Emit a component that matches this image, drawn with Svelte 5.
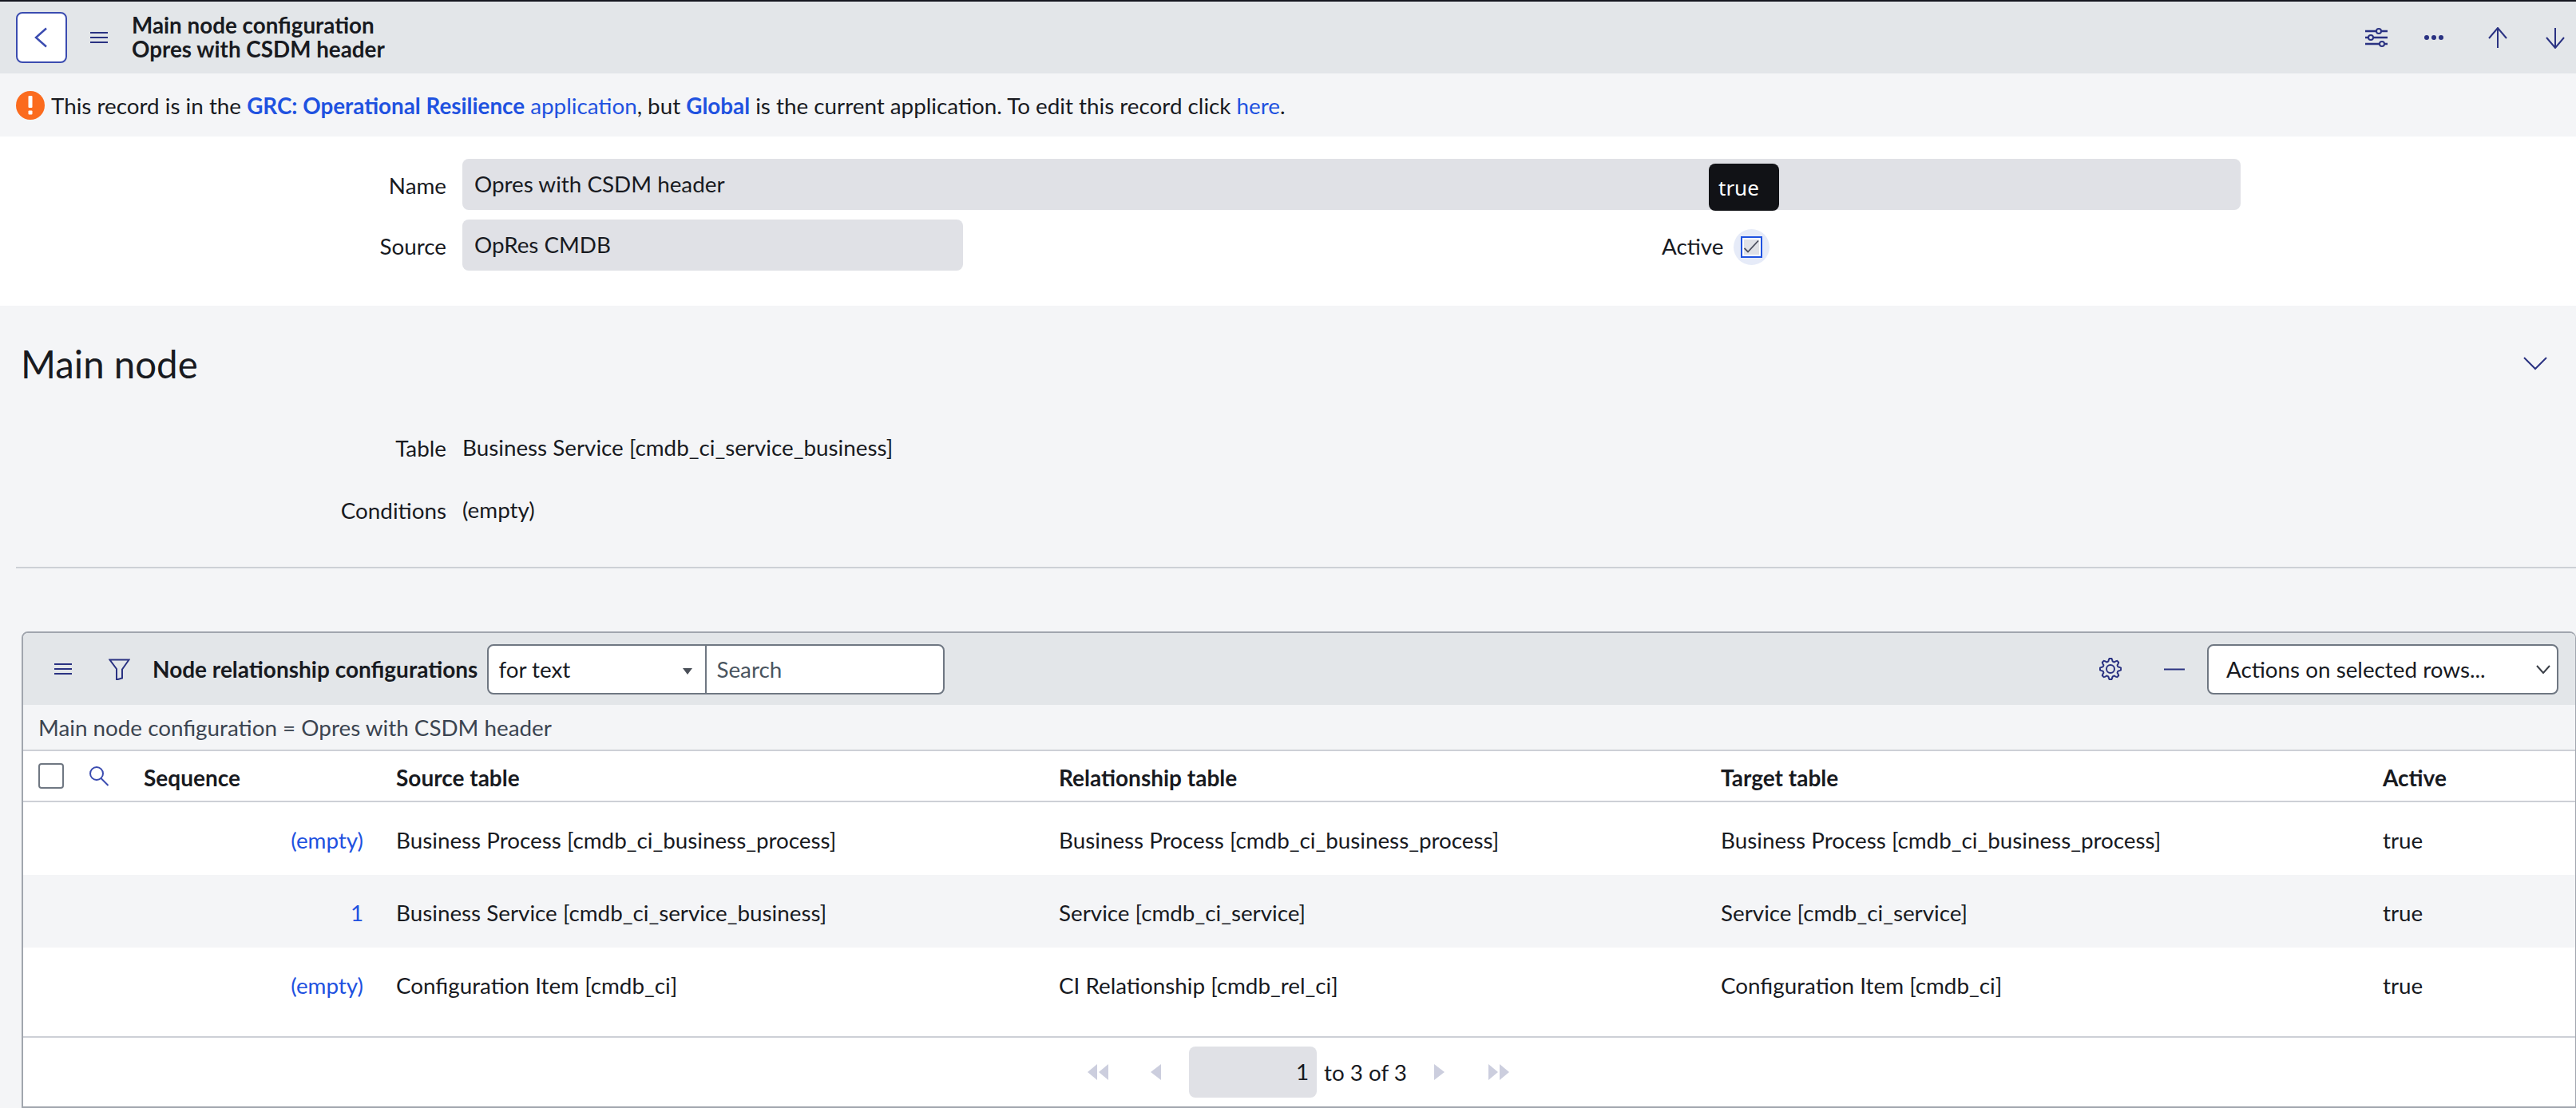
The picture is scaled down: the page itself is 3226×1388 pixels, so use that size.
<script lang="ts">
	type Row = { seq: string; source: string; rel: string; target: string; active: string };

	const rows: Row[] = [
		{
			seq: '(empty)',
			source: 'Business Process [cmdb_ci_business_process]',
			rel: 'Business Process [cmdb_ci_business_process]',
			target: 'Business Process [cmdb_ci_business_process]',
			active: 'true'
		},
		{
			seq: '1',
			source: 'Business Service [cmdb_ci_service_business]',
			rel: 'Service [cmdb_ci_service]',
			target: 'Service [cmdb_ci_service]',
			active: 'true'
		},
		{
			seq: '(empty)',
			source: 'Configuration Item [cmdb_ci]',
			rel: 'CI Relationship [cmdb_rel_ci]',
			target: 'Configuration Item [cmdb_ci]',
			active: 'true'
		}
	];

	// scalloped outline for the list settings cog, 8 lobes
	const gearPath = Array.from({ length: 120 }, (_, i) => {
		const a = (i / 120) * Math.PI * 2;
		const r = 11.4 + 1.7 * Math.max(-1, Math.min(1, 1.6 * Math.cos(8 * a)));
		return `${(14 + r * Math.sin(a)).toFixed(2)} ${(14 - r * Math.cos(a)).toFixed(2)}`;
	}).join('L');
</script>

<div class="page">
	<header class="topbar">
		<button class="back" aria-label="Back">
			<svg width="18" height="26" viewBox="0 0 18 26"><path d="M15 1.500 2 13l13 11.500" /></svg>
		</button>
		<svg class="icon menu" width="22" height="14" viewBox="0 0 22 14"><path d="M0 1h22M0 7h22M0 13h22" /></svg>
		<div class="title">
			<div>Main node configuration</div>
			<div>Opres with CSDM header</div>
		</div>
		<div class="top-actions">
			<svg class="icon sliders" width="28" height="24" viewBox="0 0 28 24">
				<path d="M0 4h28M0 12h28M0 20h28" />
				<circle cx="17" cy="4" r="3" />
				<circle cx="7" cy="12" r="3" />
				<circle cx="21" cy="20" r="3" />
			</svg>
			<svg class="dots" width="24" height="8" viewBox="0 0 24 8">
				<circle cx="3" cy="4" r="3" /><circle cx="12" cy="4" r="3" /><circle cx="21" cy="4" r="3" />
			</svg>
			<svg class="icon up" width="24" height="27" viewBox="0 0 24 27"><path d="M12 26V1M1 14 12 1l11 13" /></svg>
			<svg class="icon down" width="24" height="27" viewBox="0 0 24 27"><path d="M12 1v25M1 13l11 13 11-13" /></svg>
		</div>
	</header>

	<div class="notice">
		<svg width="36" height="36" viewBox="0 0 36 36">
			<circle cx="18" cy="18" r="18" fill="#fb6b1e" />
			<rect x="15.500" y="6" width="5" height="15" rx="1" fill="#fff" />
			<rect x="15.500" y="24.500" width="5" height="5" rx="1" fill="#fff" />
		</svg>
		<span>This record is in the <a href="#a"><b>GRC: Operational Resilience</b> application</a>, but <a href="#b"><b>Global</b></a> is the current application. To edit this record click <a href="#c">here</a>.</span>
	</div>

	<section class="form">
		<div class="field-row">
			<span class="label">Name</span>
			<div class="input wide">Opres with CSDM header</div>
			<div class="tooltip">true</div>
		</div>
		<div class="field-row">
			<span class="label">Source</span>
			<div class="input narrow">OpRes CMDB</div>
			<span class="active-label">Active</span>
			<span class="check">
				<span class="check-box">
					<svg width="19" height="19" viewBox="0 0 19 19"><path d="M0.500 11 5 15.500 18 1.500" /></svg>
				</span>
			</span>
		</div>
	</section>

	<section class="main-node">
		<div class="section-head">
			<h2>Main node</h2>
			<svg class="icon" width="30" height="18" viewBox="0 0 30 18"><path d="M1 2l14 14L29 2" /></svg>
		</div>
		<div class="ro-row first"><span class="label">Table</span><span>Business Service [cmdb_ci_service_business]</span></div>
		<div class="ro-row"><span class="label">Conditions</span><span>(empty)</span></div>
		<hr />
	</section>

	<section class="list">
		<div class="list-bar">
			<svg class="icon menu" width="22" height="14" viewBox="0 0 22 14"><path d="M0 1h22M0 7h22M0 13h22" /></svg>
			<svg class="icon funnel" width="27" height="27" viewBox="0 0 27 27"><path d="M1.500 1.500h24L17 13.500v11l-7 2v-13.500z" /></svg>
			<strong class="list-title">Node relationship configurations</strong>
			<div class="search-group">
				<div class="for-text">for text<span class="caret"></span></div>
				<div class="search">Search</div>
			</div>
			<svg class="icon gear" width="28" height="28" viewBox="0 0 28 28">
				<circle cx="14" cy="14" r="5" />
				<path d={`M${gearPath}Z`} />
			</svg>
			<svg class="icon minus" width="26" height="3" viewBox="0 0 26 3"><path d="M0 1.500h26" /></svg>
			<div class="actions">
				Actions on selected rows...
				<svg width="18" height="11" viewBox="0 0 18 11"><path d="M1 1l8 9 8-9" /></svg>
			</div>
		</div>
		<div class="breadcrumb">Main node configuration = Opres with CSDM header</div>
		<div class="grid head">
			<div class="head-tools">
				<span class="select-all"></span>
				<svg class="search-icon" width="25" height="25" viewBox="0 0 25 25"><circle cx="9" cy="9" r="8" /><path d="m14.500 15 9 9" /></svg>
			</div>
			<div>Sequence</div>
			<div>Source table</div>
			<div>Relationship table</div>
			<div>Target table</div>
			<div>Active</div>
		</div>
		{#each rows as row, i}
			<div class="grid body" class:striped={i === 1} class:last={i === 2}>
				<div></div>
				<div class="seq"><a href="#r">{row.seq}</a></div>
				<div>{row.source}</div>
				<div>{row.rel}</div>
				<div>{row.target}</div>
				<div>{row.active}</div>
			</div>
		{/each}
		<div class="pager">
			<svg width="28" height="20" viewBox="0 0 28 20"><path d="M12 0v20L0 10zM26 0v20L14 10z" /></svg>
			<svg class="gap-a" width="13" height="20" viewBox="0 0 13 20"><path d="M13 0v20L0 10z" /></svg>
			<div class="page-input">1</div>
			<span class="page-text">to 3 of 3</span>
			<svg class="gap-b" width="13" height="20" viewBox="0 0 13 20"><path d="M0 0v20l13-10z" /></svg>
			<svg class="gap-c" width="28" height="20" viewBox="0 0 28 20"><path d="M2 0v20l12-10zM16 0v20l12-10z" /></svg>
		</div>
	</section>
</div>

<style>
	:global(body) {
		margin: 0;
		background: #f4f5f7;
	}

	.page {
		width: 3226px;
		height: 1388px;
		overflow: hidden;
		box-sizing: border-box;
		border-top: 2px solid #15161f;
		font-family: Lato, 'Liberation Sans', sans-serif;
		font-size: 27.8px;
		color: #181a1f;
	}

	a {
		color: #1f52e0;
		text-decoration: none;
	}

	.icon path,
	.icon circle {
		fill: none;
		stroke: #2a3282;
		stroke-width: 2;
	}

	.topbar {
		display: flex;
		align-items: center;
		height: 90px;
		padding-left: 20px;
		background: #e3e6e9;
	}

	.back {
		display: flex;
		align-items: center;
		justify-content: center;
		box-sizing: border-box;
		width: 64px;
		height: 64px;
		padding: 0;
		border: 2px solid #3b4cb0;
		border-radius: 8px;
		background: #fff;
	}

	.back path {
		fill: none;
		stroke: #3b4cb0;
		stroke-width: 2.500;
	}

	.menu {
		margin-left: 29px;
	}

	.title {
		margin-left: 30px;
		font-size: 27.800px;
		font-weight: 700;
		line-height: 30px;
	}

	.top-actions {
		display: flex;
		align-items: center;
		margin-left: auto;
		padding-right: 14px;
	}

	.sliders path {
		stroke-width: 2.500;
	}

	.sliders circle {
		fill: #e3e6e9;
	}

	.dots {
		margin-left: 46px;
		fill: #2a3282;
	}

	.up {
		margin-left: 56px;
	}

	.down {
		margin-left: 48px;
	}

	.notice {
		display: flex;
		align-items: center;
		gap: 8px;
		height: 79px;
		padding-top: 1px;
		box-sizing: border-box;
		padding-left: 20px;
		background: #f4f5f7;
	}

	.form {
		display: flex;
		flex-direction: column;
		gap: 12px;
		height: 212px;
		box-sizing: border-box;
		padding-top: 28px;
		background: #fff;
	}

	.field-row {
		position: relative;
		display: flex;
		align-items: center;
		height: 64px;
	}

	.label {
		flex: none;
		width: 559px;
		padding-top: 2px;
		text-align: right;
	}

	.input {
		box-sizing: border-box;
		height: 64px;
		margin-left: 20px;
		padding: 0 15px;
		line-height: 64px;
		border-radius: 8px;
		background: #e0e1e6;
	}

	.input.wide {
		width: 2227px;
	}

	.input.narrow {
		width: 627px;
	}

	.tooltip {
		position: absolute;
		left: 2140px;
		top: 6px;
		box-sizing: border-box;
		width: 88px;
		height: 59px;
		padding: 0 12px;
		line-height: 60px;
		border-radius: 8px;
		background: #111216;
		color: #fff;
		font-family: 'Noto Sans', sans-serif;
		font-size: 26px;
	}

	.active-label {
		margin-left: 875px;
		padding-top: 2px;
	}

	.check {
		display: flex;
		align-items: center;
		justify-content: center;
		width: 45px;
		height: 45px;
		margin: 5px 0 0 13px;
		border-radius: 50%;
		background: #e6ebf8;
	}

	.check-box {
		display: flex;
		align-items: center;
		justify-content: center;
		box-sizing: border-box;
		width: 27px;
		height: 27px;
		border: 2.500px solid #1f52e0;
		background: #fff;
	}

	.check-box svg {
		background: #e0e1e6;
	}

	.check-box path {
		fill: none;
		stroke: #4a4d5c;
		stroke-width: 1.800;
	}

	.main-node {
		height: 408px;
		box-sizing: border-box;
		padding-top: 40px;
	}

	.section-head {
		display: flex;
		align-items: center;
		justify-content: space-between;
		height: 64px;
		padding: 0 36px 0 26px;
	}

	h2 {
		margin: 0;
		font-size: 47.400px;
		font-weight: 400;
	}

	.ro-row {
		display: flex;
		gap: 20px;
		height: 78px;
		align-items: center;
	}

	.ro-row.first {
		margin-top: 34px;
	}

	hr {
		height: 0;
		margin: 33px 0 0 20px;
		border: none;
		border-top: 2px solid #cdd0d6;
	}

	.list {
		margin-left: 27px;
		border: 2px solid #a1a6ae;
		border-right-width: 1px;
		border-radius: 8px 8px 0 0;
		overflow: hidden;
		background: #fff;
	}

	.list-bar {
		display: flex;
		align-items: center;
		height: 90px;
		background: #e3e6e9;
	}

	.list-bar .menu {
		margin-left: 39px;
	}

	.funnel {
		margin-left: 46px;
	}

	.list-title {
		margin-left: 28px;
		font-size: 28px;
	}

	.search-group {
		display: flex;
		box-sizing: border-box;
		width: 573px;
		height: 63px;
		margin-left: 12px;
		border: 2px solid #6f7782;
		border-radius: 8px;
		background: #fff;
		overflow: hidden;
	}

	.for-text {
		position: relative;
		box-sizing: border-box;
		width: 273px;
		padding-left: 12px;
		line-height: 60px;
		border-right: 2px solid #6f7782;
	}

	.caret {
		position: absolute;
		right: 16px;
		top: 28px;
		border: 6px solid transparent;
		border-top: 8px solid #4a4f58;
		border-bottom: none;
	}

	.search {
		padding-left: 12px;
		line-height: 60px;
		color: #4a5560;
	}

	.gear {
		margin-left: auto;
	}

	.minus {
		margin-left: 53px;
	}

	.actions {
		display: flex;
		align-items: center;
		justify-content: space-between;
		box-sizing: border-box;
		width: 440px;
		height: 63px;
		margin: 0 21px 0 28px;
		padding: 0 8px 0 22px;
		border: 2px solid #6f7782;
		border-radius: 8px;
		background: #fff;
	}

	.actions path {
		fill: none;
		stroke: #3a3f47;
		stroke-width: 2;
	}

	.breadcrumb {
		height: 58px;
		box-sizing: border-box;
		padding-left: 19px;
		line-height: 58px;
		background: #f4f5f7;
		color: #3b4450;
		border-bottom: 2px solid #cdd0d6;
	}

	.grid {
		display: grid;
		grid-template-columns: 151px 316px 830px 829px 829px 1fr;
		align-items: center;
	}

	.head {
		height: 64px;
		box-sizing: border-box;
		padding-top: 3px;
		font-weight: 700;
		font-size: 28px;
		border-bottom: 2px solid #cdd0d6;
	}

	.head-tools {
		display: flex;
		align-items: center;
		gap: 32px;
		padding-left: 19px;
		margin-top: -3px;
	}

	.select-all {
		box-sizing: border-box;
		width: 32px;
		height: 32px;
		border: 2px solid #6f7782;
		border-radius: 4px;
	}

	.search-icon * {
		fill: none;
		stroke: #3b4cb0;
		stroke-width: 2;
	}

	.body {
		height: 91px;
		box-sizing: border-box;
		padding-top: 3px;
	}

	.body.last {
		height: 111px;
		padding-bottom: 20px;
	}

	.striped {
		background: #f4f5f7;
	}

	.seq {
		padding-right: 41px;
		text-align: right;
	}

	.pager {
		display: flex;
		align-items: center;
		justify-content: center;
		height: 88px;
		box-sizing: border-box;
		padding-right: 2px;
		border-top: 2px solid #cdd0d6;
		fill: #cccede;
	}

	.gap-a {
		margin-left: 51px;
		margin-right: 35px;
	}

	.page-input {
		box-sizing: border-box;
		width: 160px;
		height: 64px;
		padding-right: 10px;
		line-height: 64px;
		text-align: right;
		border-radius: 8px;
		background: #e0e1e6;
	}

	.page-text {
		margin-left: 9px;
	}

	.gap-b {
		margin-left: 34px;
	}

	.gap-c {
		margin-left: 53px;
	}
</style>
